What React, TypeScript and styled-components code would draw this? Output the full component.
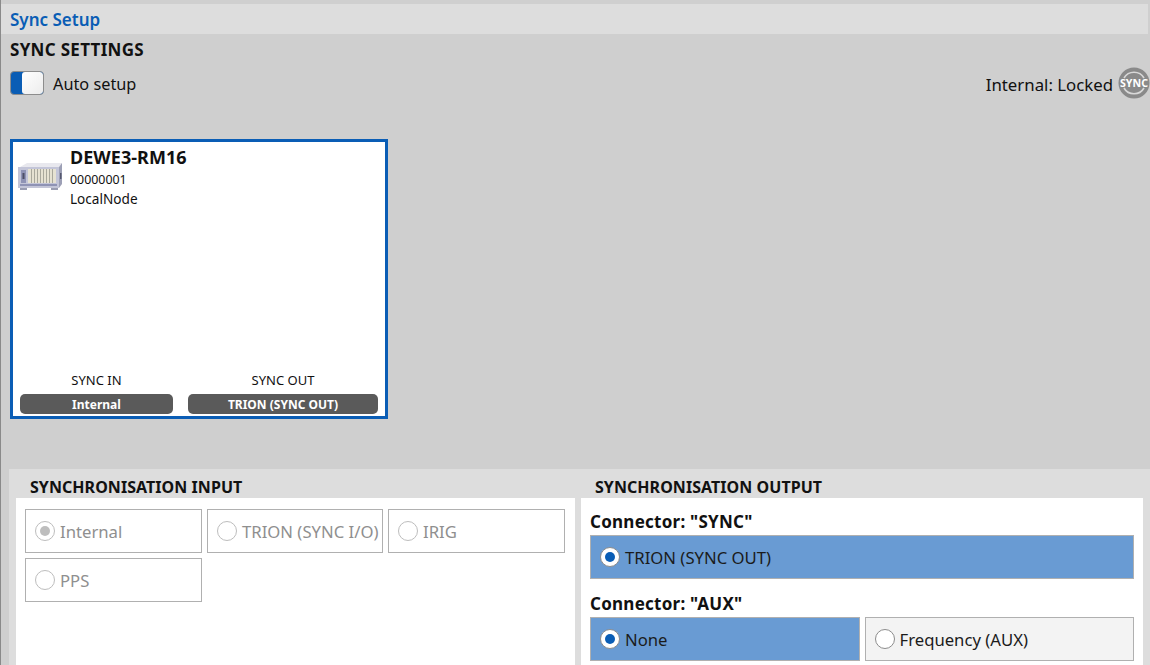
import React, { FC } from 'react';
import styled, { createGlobalStyle } from 'styled-components';

const GlobalStyle = createGlobalStyle`
  html, body {
    margin: 0;
    padding: 0;
    height: 100%;
    overflow: hidden;
  }
  body {
    font-family: 'Noto Sans', 'Open Sans', sans-serif;
    color: #111;
    background: #cfcfcf;
  }
`;

const Page = styled.div`
  width: 1150px;
  height: 665px;
  box-sizing: border-box;
  padding-top: 4px;
  border-left: 1px solid #8a8a8a;
  background: #cfcfcf;
  overflow: hidden;
  display: flex;
  flex-direction: column;
`;

const TitleBar = styled.div`
  height: 30px;
  box-sizing: border-box;
  margin-right: 2px;
  padding-left: 9px;
  display: flex;
  align-items: center;
  background: #dddddd;
  color: #0a5db5;
  font-size: 17px;
  font-weight: 600;
`;

const SectionTitle = styled.div`
  height: 30px;
  box-sizing: border-box;
  padding-left: 9px;
  display: flex;
  align-items: center;
  font-size: 17px;
  font-weight: 700;
  letter-spacing: 0.3px;
`;

const SettingsRow = styled.div`
  height: 38px;
  padding-left: 9px;
  display: flex;
  align-items: center;
  justify-content: space-between;
`;

const SettingGroup = styled.div`
  display: flex;
  align-items: center;
`;

const Toggle = styled.div`
  width: 34px;
  height: 24px;
  box-sizing: border-box;
  margin-right: 9px;
  border: 1px solid #8d8d8d;
  border-radius: 4px;
  overflow: hidden;
  display: flex;
  background: #0a5db5;
`;

const ToggleKnob = styled.div`
  margin-left: 11px;
  flex: 1;
  border-radius: 3px;
  background: linear-gradient(135deg, #ffffff, #ececec);
`;

const SettingLabel = styled.span`
  padding-top: 2px;
  font-size: 16.3px;
`;

const StatusText = styled.span`
  margin-right: 5px;
  padding-top: 2px;
  font-size: 16.8px;
`;

const CardArea = styled.div`
  height: 367px;
  padding: 37px 0 0 9px;
  box-sizing: border-box;
`;

const Card = styled.div`
  width: 378px;
  height: 280px;
  box-sizing: border-box;
  border: 3px solid #0a5db5;
  background: #fff;
  display: flex;
  flex-direction: column;
  justify-content: space-between;
`;

const CardTop = styled.div`
  display: flex;
  padding: 3px 0 0 4px;
`;

const DeviceImage = styled.svg`
  width: 48px;
  height: 32px;
  margin: 15px 5px 0 0;
  flex: none;
  filter: blur(0.4px);
`;

const DeviceName = styled.div`
  font-size: 18px;
  font-weight: 700;
  line-height: 25px;
  letter-spacing: 0.05px;
`;

const DeviceLine = styled.div<{ $size: number }>`
  font-size: ${({ $size }) => $size}px;
  line-height: 19px;
`;

const CardPorts = styled.div`
  display: grid;
  grid-template-columns: 153px 190px;
  column-gap: 15px;
  padding: 0 6px 2px 7px;
`;

const Port = styled.div`
  display: flex;
  flex-direction: column;
  align-items: center;
  gap: 5px;
`;

const PortLabel = styled.div`
  font-size: 13px;
  line-height: 18px;
`;

const PortValue = styled.div`
  width: 100%;
  height: 20px;
  border-radius: 5px;
  background: #5a5a5a;
  color: #fff;
  font-size: 12px;
  font-weight: 700;
  display: flex;
  align-items: center;
  justify-content: center;
`;

const BottomArea = styled.div`
  flex: 1;
  margin-left: 8px;
  padding: 0 6px 0 7px;
  background: #dddddd;
  display: grid;
  grid-template-columns: 559px 562px;
  column-gap: 6px;
`;

const Panel = styled.div`
  display: flex;
  flex-direction: column;
  min-width: 0;
`;

const PanelTitle = styled.div`
  height: 29px;
  padding: 7px 0 0 14px;
  box-sizing: border-box;
  display: flex;
  align-items: center;
  font-size: 16px;
  font-weight: 700;
  letter-spacing: 0.05px;
`;

const PanelBody = styled.div`
  flex: 1;
  background: #fff;
`;

const InputGrid = styled.div`
  padding: 11px 9px;
  display: grid;
  grid-template-columns: 177px 176px 177px;
  grid-auto-rows: 44px;
  gap: 5px;
`;

const OutputBody = styled.div`
  padding: 12px 9px 0;
`;

const ConnectorLabel = styled.div<{ $spaced?: boolean }>`
  height: 23px;
  margin-top: ${({ $spaced }) => ($spaced ? '13px' : '0')};
  margin-bottom: 2px;
  display: flex;
  align-items: center;
  font-size: 17px;
  font-weight: 700;
  letter-spacing: 0.25px;
`;

const OptionRow = styled.div`
  display: flex;
  gap: 5px;
`;

const Option = styled.div<{ $variant: 'disabled' | 'selected' | 'idle' }>`
  flex: 1;
  min-width: 0;
  height: 44px;
  box-sizing: border-box;
  padding-left: 9px;
  display: flex;
  align-items: center;
  gap: 5px;
  white-space: nowrap;
  overflow: hidden;
  font-size: 16.7px;
  border: 1px solid #b0b0b0;
  color: ${({ $variant }) => ($variant === 'disabled' ? '#8f8f8f' : '#1b1b1b')};
  background: ${({ $variant }) =>
    $variant === 'selected' ? '#699bd3' : $variant === 'idle' ? '#f3f3f3' : '#fff'};
`;

const Radio = styled.span<{ $checked?: boolean; $disabled?: boolean }>`
  width: 20px;
  height: 20px;
  flex: none;
  box-sizing: border-box;
  border-radius: 50%;
  border: 1px solid ${({ $disabled }) => ($disabled ? '#bdbdbd' : '#8c8c8c')};
  background: #fff;
  display: flex;
  align-items: center;
  justify-content: center;

  &::after {
    content: '';
    display: ${({ $checked }) => ($checked ? 'block' : 'none')};
    width: 10px;
    height: 10px;
    border-radius: 50%;
    background: ${({ $disabled }) => ($disabled ? '#bdbdbd' : '#0a5db5')};
  }
`;

const SyncBadge: FC = () => (
  <svg width="32" height="32" viewBox="0 0 32 32">
    <circle cx="16" cy="16" r="15.5" fill="#8a8a8a" />
    <path d="M6 11 A11.5 11.5 0 0 1 26 11" fill="none" stroke="#d8d8d8" strokeWidth="1.6" />
    <path d="M26 21 A11.5 11.5 0 0 1 6 21" fill="none" stroke="#d8d8d8" strokeWidth="1.6" />
    <text
      x="16"
      y="20"
      textAnchor="middle"
      fontFamily="'Noto Sans', sans-serif"
      fontSize="10.5"
      fontWeight="700"
      fill="#fff"
      textLength="28"
      lengthAdjust="spacingAndGlyphs"
    >
      SYNC
    </text>
  </svg>
);

const DeviceIcon: FC = () => (
  <DeviceImage viewBox="0 0 48 32">
    <path d="M3 7 L10 3 H45 L42 7 Z" fill="#e8e8ee" />
    <rect x="1" y="7" width="41" height="21" fill="#c3c5d8" />
    <path d="M42 7 L45 3 V24 L42 28 Z" fill="#9da0b6" />
    <rect x="4" y="10" width="5" height="13" fill="#8f93b5" />
    <rect x="5.5" y="13" width="2" height="6" fill="#4d4f66" />
    <rect x="11" y="9" width="28" height="14" fill="#e6e2d2" />
    {[14, 17, 20, 23, 26, 29, 32, 35].map((x) => (
      <rect key={x} x={x} y="9" width="1" height="14" fill="#a9a89c" />
    ))}
    <rect x="3" y="24" width="37" height="2" fill="#8f93b5" />
    <rect x="43" y="13" width="1.5" height="6" fill="#55586e" />
    <path d="M3 28 H10 V30 H3 Z M34 28 H41 V30 H34 Z" fill="#9a9db2" />
  </DeviceImage>
);

const App: FC = () => (
  <Page>
    <GlobalStyle />
    <TitleBar>Sync Setup</TitleBar>
    <SectionTitle>SYNC SETTINGS</SectionTitle>
    <SettingsRow>
      <SettingGroup>
        <Toggle>
          <ToggleKnob />
        </Toggle>
        <SettingLabel>Auto setup</SettingLabel>
      </SettingGroup>
      <SettingGroup>
        <StatusText>Internal: Locked</StatusText>
        <SyncBadge />
      </SettingGroup>
    </SettingsRow>
    <CardArea>
      <Card>
        <CardTop>
          <DeviceIcon />
          <div>
            <DeviceName>DEWE3-RM16</DeviceName>
            <DeviceLine $size={12.4}>00000001</DeviceLine>
            <DeviceLine $size={13.6}>LocalNode</DeviceLine>
          </div>
        </CardTop>
        <CardPorts>
          <Port>
            <PortLabel>SYNC IN</PortLabel>
            <PortValue>Internal</PortValue>
          </Port>
          <Port>
            <PortLabel>SYNC OUT</PortLabel>
            <PortValue>TRION (SYNC OUT)</PortValue>
          </Port>
        </CardPorts>
      </Card>
    </CardArea>
    <BottomArea>
      <Panel>
        <PanelTitle>SYNCHRONISATION INPUT</PanelTitle>
        <PanelBody>
          <InputGrid>
            <Option $variant="disabled">
              <Radio $checked $disabled />
              Internal
            </Option>
            <Option $variant="disabled">
              <Radio $disabled />
              TRION (SYNC I/O)
            </Option>
            <Option $variant="disabled">
              <Radio $disabled />
              IRIG
            </Option>
            <Option $variant="disabled">
              <Radio $disabled />
              PPS
            </Option>
          </InputGrid>
        </PanelBody>
      </Panel>
      <Panel>
        <PanelTitle>SYNCHRONISATION OUTPUT</PanelTitle>
        <PanelBody>
          <OutputBody>
            <ConnectorLabel>Connector: "SYNC"</ConnectorLabel>
            <OptionRow>
              <Option $variant="selected">
                <Radio $checked />
                TRION (SYNC OUT)
              </Option>
            </OptionRow>
            <ConnectorLabel $spaced>Connector: "AUX"</ConnectorLabel>
            <OptionRow>
              <Option $variant="selected">
                <Radio $checked />
                None
              </Option>
              <Option $variant="idle">
                <Radio />
                Frequency (AUX)
              </Option>
            </OptionRow>
          </OutputBody>
        </PanelBody>
      </Panel>
    </BottomArea>
  </Page>
);

export default App;
